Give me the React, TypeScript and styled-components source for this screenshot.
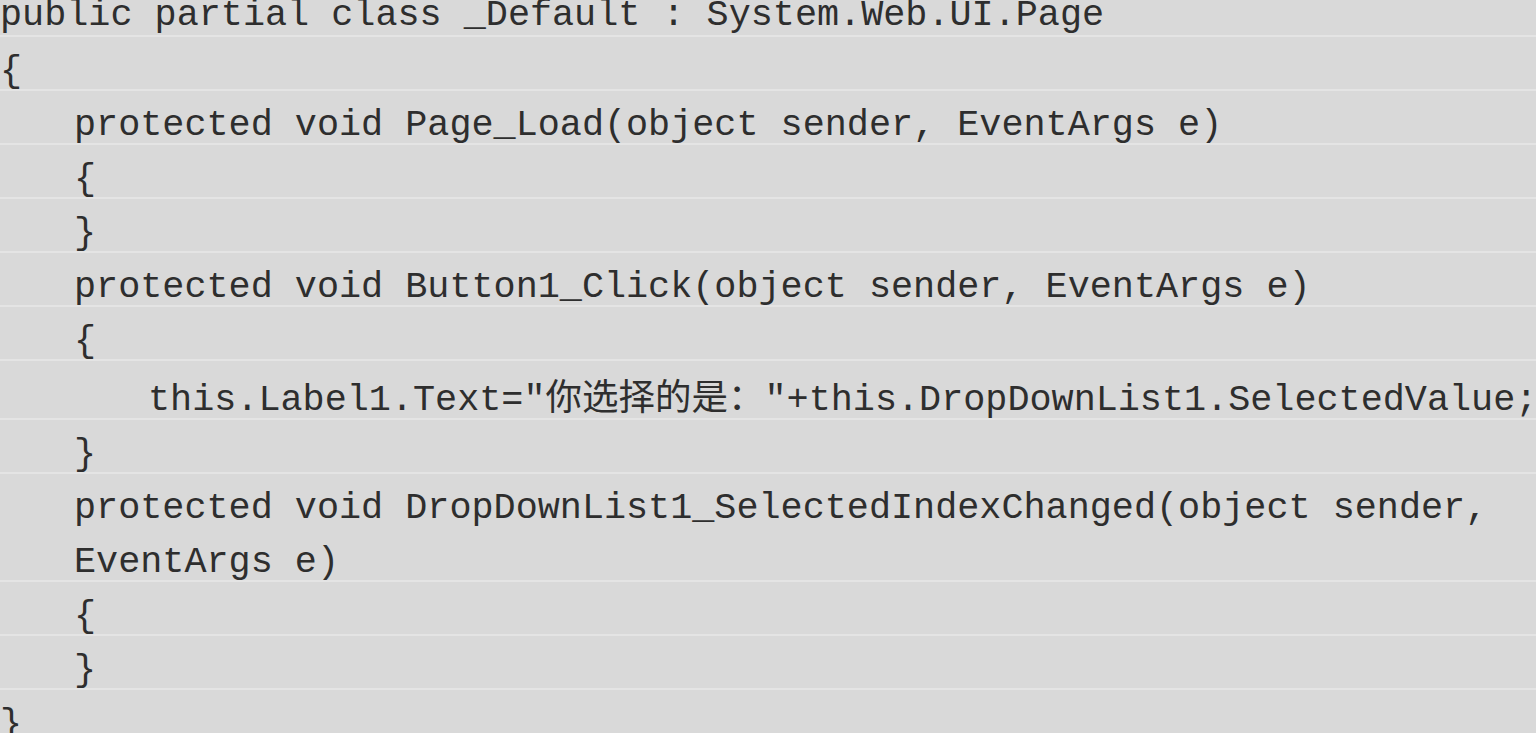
import React from "react";
import styled, { createGlobalStyle } from "styled-components";

const Global = createGlobalStyle`
  html, body { margin: 0; padding: 0; background: #d9d9d9; overflow: hidden; }
`;

const Listing = styled.div`
  background: #d9d9d9;
  min-height: 100vh;
  margin-top: -19px;
  font-family: "Liberation Mono", "Noto Sans CJK SC", monospace;
  font-size: 36.8px;
  color: #2e2e2e;
`;

const Row = styled.div<{ $indent: number }>`
  padding-left: ${(p) => p.$indent * 74}px;
  padding-top: 16px;
  line-height: 36px;
  border-top: 2px solid #e4e4e4;
  white-space: pre;
  &:first-child { border-top-color: transparent; padding-top: 14px; padding-bottom: 2px; }
`;

const Part = styled.div`
  & + & { margin-top: 18px; }
`;

const Cjk = styled.span`
  font-family: "Noto Sans CJK SC", sans-serif;
  font-size: 36.5px;
`;

export default function App() {
  return (
    <>
      <Global />
      <Listing>
        <Row $indent={0}>public partial class _Default : System.Web.UI.Page</Row>
        <Row $indent={0}>{"{"}</Row>
        <Row $indent={1}>protected void Page_Load(object sender, EventArgs e)</Row>
        <Row $indent={1}>{"{"}</Row>
        <Row $indent={1}>{"}"}</Row>
        <Row $indent={1}>protected void Button1_Click(object sender, EventArgs e)</Row>
        <Row $indent={1}>{"{"}</Row>
        <Row $indent={2}>
          this.Label1.Text="<Cjk>你选择的是：</Cjk>"+this.DropDownList1.SelectedValue;
        </Row>
        <Row $indent={1}>{"}"}</Row>
        <Row $indent={1}>
          <Part>protected void DropDownList1_SelectedIndexChanged(object sender,</Part>
          <Part>EventArgs e)</Part>
        </Row>
        <Row $indent={1}>{"{"}</Row>
        <Row $indent={1}>{"}"}</Row>
        <Row $indent={0}>{"}"}</Row>
      </Listing>
    </>
  );
}
